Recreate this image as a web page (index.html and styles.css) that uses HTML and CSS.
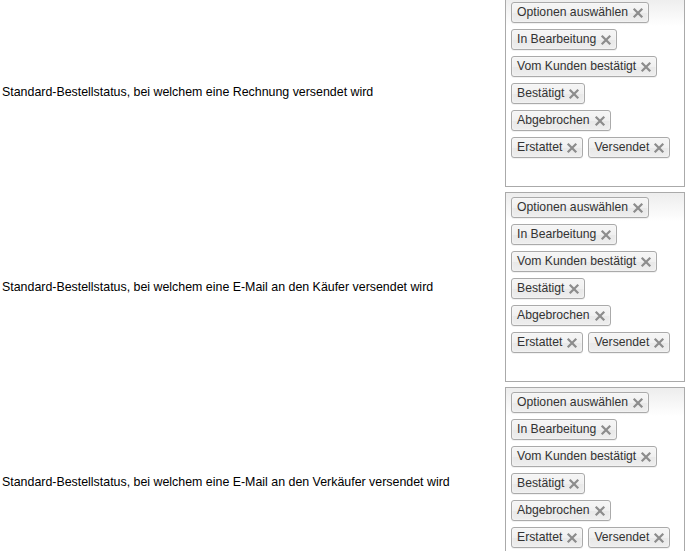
FILE: index.html
```html
<!DOCTYPE html>
<html lang="de">
<head>
    <meta charset="UTF-8">
    <title>Bestellstatus Einstellungen</title>
    <link rel="stylesheet" href="styles.css">
</head>
<body>
    <div class="settings" id="settings">
        <!-- Rows are filled in by the script below -->
    </div>

    <script>
        // Order states offered in each select
        const states = [
            "Optionen auswählen",
            "In Bearbeitung",
            "Vom Kunden bestätigt",
            "Bestätigt",
            "Abgebrochen",
            "Erstattet",
            "Versendet"
        ];

        const labels = [
            "Standard-Bestellstatus, bei welchem eine Rechnung versendet wird",
            "Standard-Bestellstatus, bei welchem eine E-Mail an den Käufer versendet wird",
            "Standard-Bestellstatus, bei welchem eine E-Mail an den Verkäufer versendet wird"
        ];

        const closeIcon = `<svg class="choice-close" width="12" height="12" viewBox="0 0 12 12"><path d="M2.5 2.5 L9.5 9.5 M9.5 2.5 L2.5 9.5" stroke="#8c8c8c" stroke-width="2.2" stroke-linecap="square"/></svg>`;

        function buildRows() {
            const container = document.getElementById("settings");
            labels.forEach(label => {
                const row = document.createElement("div");
                row.className = "setting-row";
                const chips = states.map(state => `<li class="choice">${state}${closeIcon}</li>`).join("");
                row.innerHTML = `
                    <div class="setting-label">${label}</div>
                    <div class="multi-select">
                        <ul class="choices">${chips}</ul>
                    </div>
                `;
                container.appendChild(row);
            });
        }

        buildRows();
    </script>
</body>
</html>
```

FILE: styles.css
```css
/* General styles */
body {
    font-family: "Liberation Sans", Arial, sans-serif;
    font-size: 12.4px;
    color: #000;
    background: #fff;
    margin: 0;
    padding: 0 0 0 2px;
}
.settings {
    margin-top: -3px;
}

/* One row per setting */
.setting-row {
    display: grid;
    grid-template-columns: 503px 180px;
    align-items: center;
    margin-bottom: 5px;
}
.setting-label {
    line-height: 14px;
}

/* Chosen style multi select */
.multi-select {
    height: 190px;
    box-sizing: border-box;
    border: 1px solid #aaa;
    background-color: #fff;
    background-image: linear-gradient(#eee 1%, #fff 15%);
}
.choices {
    list-style: none;
    margin: 0;
    padding: 1px 5px 0;
    display: flex;
    flex-wrap: wrap;
    align-content: flex-start;
}
.choice {
    position: relative;
    margin: 3px 5px 3px 0;
    padding: 3px 20px 3px 5px;
    border: 1px solid #aaa;
    border-radius: 3px;
    background-color: #eee;
    background-image: linear-gradient(#f4f4f4 20%, #f0f0f0 50%, #e8e8e8 52%, #eee 100%);
    box-shadow: 0 0 2px #fff inset, 0 1px 0 rgba(0, 0, 0, 0.05);
    color: #333;
    font-size: 12.2px;
    line-height: 13px;
    white-space: nowrap;
}
.choice-close {
    position: absolute;
    top: 4px;
    right: 4px;
}
```
